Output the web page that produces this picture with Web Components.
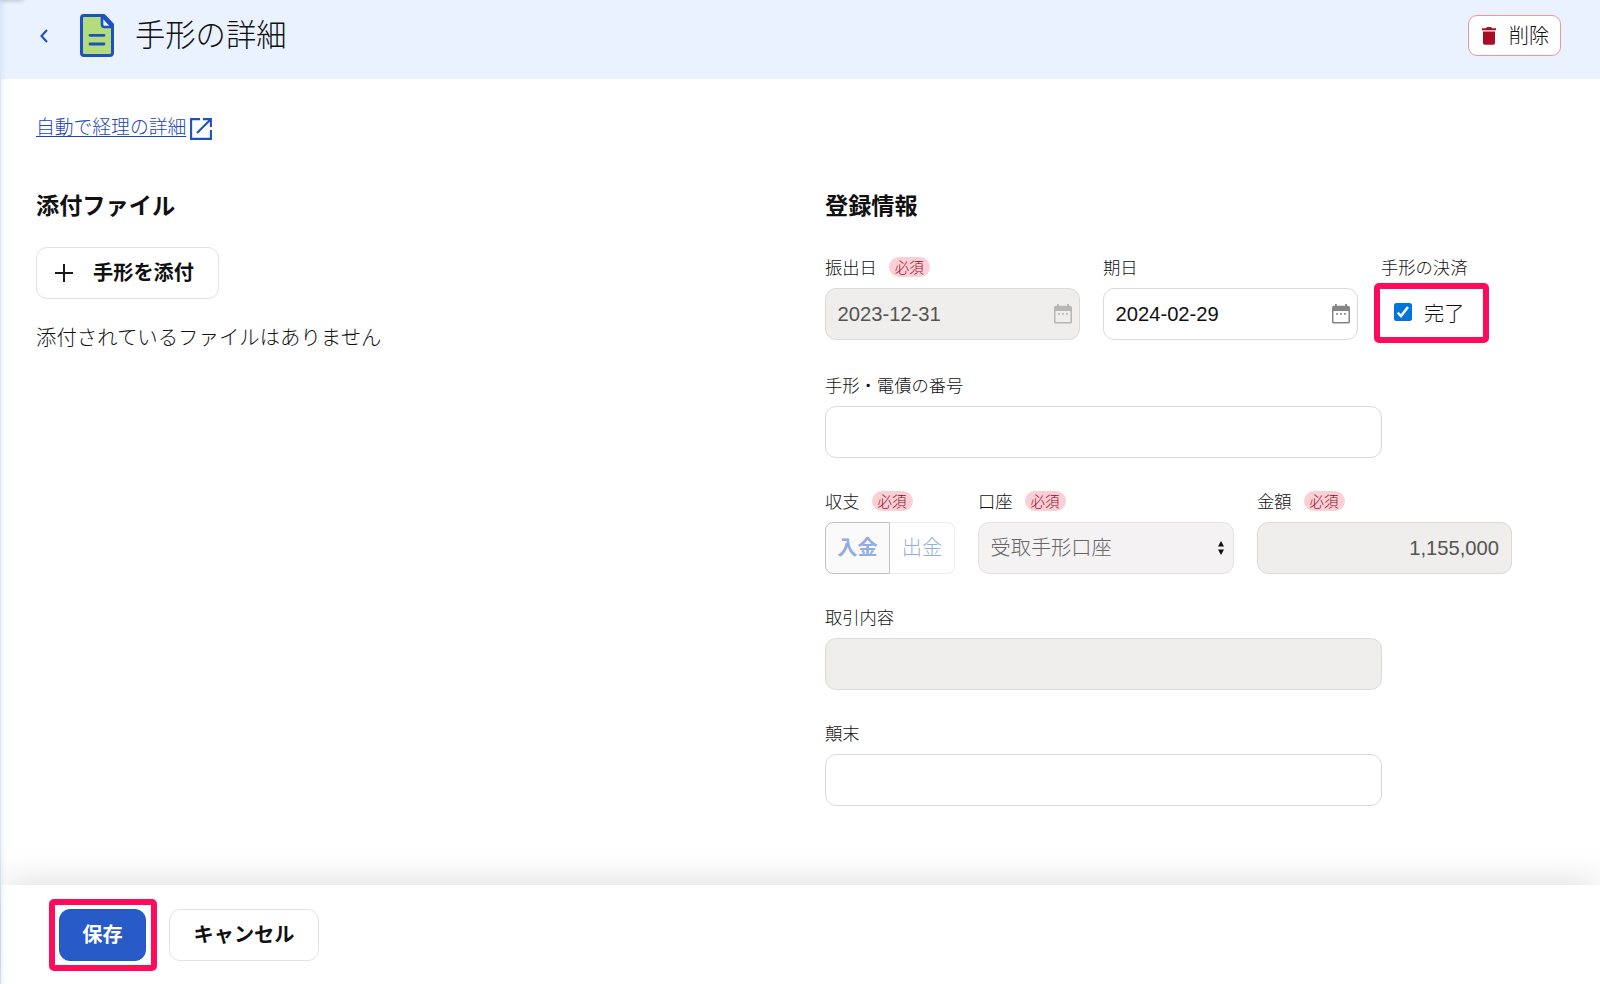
<!DOCTYPE html>
<html lang="ja">
<head>
<meta charset="utf-8">
<title>手形の詳細</title>
<style>
  html, body {
    height: 100%;
    margin: 0;
    overflow: hidden;
  }
  body {
    background: #fff;
    color: #111;
    font-family: "Noto Sans CJK JP", sans-serif;
    font-size: 20.2px;
    font-weight: 300;
    line-height: 30px;
  }
</style>
</head>
<body>
<bill-page>
  <page-header slot="header">
    手形の詳細
    <app-button slot="action" kind="danger">
      <app-icon slot="icon" name="trash"></app-icon>
      削除
    </app-button>
  </page-header>

  <external-link slot="link">自動で経理の詳細</external-link>

  <page-section slot="files" heading="添付ファイル">
    <app-button kind="attach"><app-icon slot="icon" name="plus"></app-icon>手形を添付</app-button>
    <p>添付されているファイルはありません</p>
  </page-section>

  <page-section slot="info" heading="登録情報">
    <form-row first>
      <form-field label="振出日" required><text-box icon="calendar" disabled>2023-12-31</text-box></form-field>
      <form-field label="期日"><text-box icon="calendar">2024-02-29</text-box></form-field>
      <form-field label="手形の決済"><mark-frame kind="check"><check-item>完了</check-item></mark-frame></form-field>
    </form-row>
    <form-row>
      <form-field label="手形・電債の番号"><text-box wide></text-box></form-field>
    </form-row>
    <form-row>
      <form-field label="収支" required><toggle-pair on="入金" off="出金"></toggle-pair></form-field>
      <form-field label="口座" required><text-box icon="updown" select>受取手形口座</text-box></form-field>
      <form-field label="金額" required><text-box number disabled>1,155,000</text-box></form-field>
    </form-row>
    <form-row>
      <form-field label="取引内容"><text-box wide disabled></text-box></form-field>
    </form-row>
    <form-row>
      <form-field label="顛末"><text-box wide></text-box></form-field>
    </form-row>
  </page-section>

  <page-footer slot="footer">
    <mark-frame kind="save"><app-button kind="primary">保存</app-button></mark-frame>
    <app-button kind="cancel">キャンセル</app-button>
  </page-footer>
</bill-page>

<script>
const ICONS = {
  back: [8, 14, '<path d="M7 1 1.5 7 7 13" fill="none" stroke="#1c51c4" stroke-width="2.1"/>'],
  doc: [34, 43, `
    <path d="M4 1.500h20l8.500 9V38.500q0 3-3 3H4q-2.500 0-2.500-2.500V4Q1.500 1.500 4 1.500z" fill="#b3dc7d" stroke="#1c51c4" stroke-width="3" stroke-linejoin="round"/>
    <path d="M22 2v8.500q0 2.500 2.500 2.500H32z" fill="#eaf2ff" stroke="#1c51c4" stroke-width="2.600" stroke-linejoin="round"/>
    <path d="M10 21.300h14M10 30h14" stroke="#1c51c4" stroke-width="2.800" stroke-linecap="round"/>`],
  trash: [14, 18, '<path d="M0 1.300h4L5 0h4l1 1.300h4v2H0zM1 4.500h12v11.500q0 1.800-1.800 1.800H2.800Q1 17.800 1 16z" fill="#a80f22"/>'],
  plus: [18, 18, '<path d="M9 0v18M0 9h18" stroke="#1a1a1a" stroke-width="2"/>'],
  external: [22, 22, '<path d="M10 1.100H1.100v19.800h19.800V12M13 1.100h7.900V9M20.500 1.500 7 15" fill="none" stroke="#1c51c4" stroke-width="2.100"/>'],
  calendar: [18, 20, `
    <path d="M3 0h1.800v1.800h8.400V0H15v1.800h1q2 0 2 2V18q0 1.500-1.500 1.500h-15Q0 19.500 0 18V3.800q0-2 2-2h1zM1.500 7v10.300q0 .7.700.7h13.600q.7 0 .7-.7V7z" fill="currentColor" fill-rule="evenodd"/>
    <path d="M4.200 9h1.800v1.800H4.200zM8.100 9h1.800v1.800H8.100zM12 9h1.800v1.800H12z" fill="currentColor"/>`],
  updown: [6, 14, '<path d="M3 0l3 5.500H0zM3 14 0 8.500h6z" fill="#111"/>'],
  check: [18, 18, `
    <rect width="18" height="18" rx="2.500" fill="#0075db"/>
    <path d="M3.700 9.600 7 13l7-9" fill="none" stroke="#fff" stroke-width="2.500"/>`]
};

class AppIcon extends HTMLElement {
  connectedCallback() {
    const [w, h, body] = ICONS[this.getAttribute('name')];
    this.attachShadow({mode: 'open'}).innerHTML = `
      <style>
        :host { display: block; flex: none; }
        svg { display: block; }
      </style>
      <svg width="${w}" height="${h}" viewBox="0 0 ${w} ${h}">${body}</svg>
    `;
  }
}
customElements.define('app-icon', AppIcon);

class BillPage extends HTMLElement {
  connectedCallback() {
    this.attachShadow({mode: 'open'}).innerHTML = `
      <style>
        :host {
          position: relative;
          display: flex;
          flex-direction: column;
          box-sizing: border-box;
          height: 100vh;
          border-left: 1px solid #dae6ff;
        }
        /* soft edge cast by the side menu */
        :host::before {
          content: "";
          position: absolute;
          z-index: 1;
          inset: 0 auto 0 0;
          width: 5px;
          background: linear-gradient(90deg, rgba(60, 90, 170, .07), transparent);
        }
        :host::after {
          content: "";
          position: absolute;
          top: -4px;
          left: -1px;
          width: 23px;
          height: 4px;
          box-shadow: 0 0 5px rgba(0, 0, 0, .3);
        }
        main {
          flex: 1;
          padding: 32px 35px 0;
        }
        .columns {
          display: grid;
          grid-template-columns: 789px 1fr;
          margin-top: 48px;
        }
      </style>
      <slot name="header"></slot>
      <main>
        <slot name="link"></slot>
        <div class="columns">
          <slot name="files"></slot>
          <slot name="info"></slot>
        </div>
      </main>
      <slot name="footer"></slot>
    `;
  }
}
customElements.define('bill-page', BillPage);

class PageHeader extends HTMLElement {
  connectedCallback() {
    this.attachShadow({mode: 'open'}).innerHTML = `
      <style>
        :host {
          display: flex;
          align-items: center;
          box-sizing: border-box;
          height: 79px;
          padding: 0 39px 8px 39px;
          background: #eaf2ff;
        }
        .doc { margin: 0 0 0 32px; }
        h1 {
          flex: 1;
          margin: -5px 0 0 21px;
          font-size: 30.3px;
          font-weight: 300;
          line-height: 44px;
        }
      </style>
      <app-icon name="back"></app-icon>
      <app-icon class="doc" name="doc"></app-icon>
      <h1><slot></slot></h1>
      <slot name="action"></slot>
    `;
  }
}
customElements.define('page-header', PageHeader);

class AppButton extends HTMLElement {
  connectedCallback() {
    this.attachShadow({mode: 'open'}).innerHTML = `
      <style>
        :host { display: block; flex: none; }
        button {
          display: flex;
          align-items: center;
          justify-content: center;
          box-sizing: border-box;
          width: 100%;
          height: 52px;
          padding: 0 0 2px;
          border: 1px solid #e2e2e2;
          border-radius: 11px;
          background: #fff;
          color: inherit;
          font: inherit;
          font-weight: 700;
          line-height: 30px;
          white-space: nowrap;
        }
        :host([kind="danger"]) { width: 93px; }
        :host([kind="danger"]) button {
          gap: 13px;
          height: 41px;
          padding: 0 0 2px 2px;
          border-color: #f5939e;
          border-radius: 9px;
          font-weight: 300;
        }
        :host([kind="danger"]) ::slotted(app-icon) { margin-top: 2px; }
        :host([kind="attach"]) { width: 183px; }
        :host([kind="attach"]) button {
          justify-content: flex-start;
          gap: 20px;
          padding-left: 18px;
        }
        :host([kind="attach"]) ::slotted(app-icon) { margin-top: 2px; }
        :host([kind="primary"]) { width: 87px; }
        :host([kind="primary"]) button {
          border-color: #1f56c8;
          background: #285ac8;
          color: #fff;
        }
        :host([kind="cancel"]) { width: 150px; }
      </style>
      <button type="button"><slot name="icon"></slot><span><slot></slot></span></button>
    `;
  }
}
customElements.define('app-button', AppButton);

class ExternalLink extends HTMLElement {
  connectedCallback() {
    this.attachShadow({mode: 'open'}).innerHTML = `
      <style>
        :host {
          display: flex;
          align-items: center;
          height: 30px;
          font-size: 18.8px;
        }
        a {
          color: #1c46bd;
          text-decoration: underline;
          text-decoration-thickness: 1px;
          text-underline-offset: 2px;
        }
        app-icon { margin: 6px 0 0 4px; }
      </style>
      <a><slot></slot></a><app-icon name="external"></app-icon>
    `;
  }
}
customElements.define('external-link', ExternalLink);

class PageSection extends HTMLElement {
  connectedCallback() {
    this.attachShadow({mode: 'open'}).innerHTML = `
      <style>
        :host { display: block; }
        h2 {
          margin: 0 0 27px;
          font-size: 23.2px;
          font-weight: 700;
          line-height: 31px;
        }
        ::slotted(p) {
          margin: 22px 0 0;
          font-size: 20.4px;
        }
      </style>
      <h2>${this.getAttribute('heading')}</h2>
      <slot></slot>
    `;
  }
}
customElements.define('page-section', PageSection);

class FormRow extends HTMLElement {
  connectedCallback() {
    this.attachShadow({mode: 'open'}).innerHTML = `
      <style>
        :host {
          display: flex;
          gap: 23px;
          height: 116px;
        }
        :host([first]) {
          height: 118px;
          margin-top: 34px;
        }
      </style>
      <slot></slot>
    `;
  }
}
customElements.define('form-row', FormRow);

class FormField extends HTMLElement {
  connectedCallback() {
    this.attachShadow({mode: 'open'}).innerHTML = `
      <style>
        :host { display: block; }
        .label {
          display: flex;
          align-items: center;
          gap: 12px;
          height: 26px;
          margin-bottom: 8px;
          font-size: 17.3px;
          line-height: 26px;
        }
        .badge {
          width: 41px;
          height: 20px;
          border-radius: 10px;
          background: #fad0d6;
          color: #98051d;
          font-size: 14.5px;
          line-height: 19px;
          text-align: center;
        }
      </style>
      <div class="label">
        <span>${this.getAttribute('label')}</span>
        ${this.hasAttribute('required') ? '<span class="badge">必須</span>' : ''}
      </div>
      <slot></slot>
    `;
  }
}
customElements.define('form-field', FormField);

class TextBox extends HTMLElement {
  connectedCallback() {
    const icon = this.getAttribute('icon');
    this.attachShadow({mode: 'open'}).innerHTML = `
      <style>
        :host {
          display: flex;
          align-items: center;
          justify-content: space-between;
          box-sizing: border-box;
          width: 255px;
          height: 52px;
          padding: 0 7px 0 11.5px;
          border: 1px solid #dadada;
          border-radius: 11px;
          background: #fff;
          font-family: "Liberation Sans", "Noto Sans CJK JP", sans-serif;
          font-weight: 400;
        }
        app-icon { color: #858585; }
        :host([wide]) { width: 557px; }
        :host([disabled]) {
          background: #efeeec;
          color: #545454;
        }
        :host([disabled]) app-icon { color: #b7b6b5; }
        :host([number]) {
          justify-content: flex-end;
          padding-right: 12px;
        }
        :host([select]) {
          padding-right: 9px;
          width: 256px;
          border-color: #e3e3e3;
          background: #f4f2f3;
          color: #666;
          font-family: "Noto Sans CJK JP", sans-serif;
          font-weight: 300;
        }
        :host([select]) span { margin-top: -2px; }
      </style>
      <span><slot></slot></span>
      ${icon ? `<app-icon name="${icon}"></app-icon>` : ''}
    `;
  }
}
customElements.define('text-box', TextBox);

class TogglePair extends HTMLElement {
  connectedCallback() {
    this.attachShadow({mode: 'open'}).innerHTML = `
      <style>
        :host { display: flex; width: 130px; }
        span {
          box-sizing: border-box;
          width: 65px;
          height: 52px;
          border: 1px solid #eee;
          border-left: 0;
          border-radius: 0 8px 8px 0;
          color: #93ade4;
          line-height: 48px;
          text-align: center;
        }
        .on {
          border: 1px solid #c2c2c2;
          border-radius: 8px 0 0 8px;
          background: #fafafa;
          font-weight: 700;
        }
      </style>
      <span class="on">${this.getAttribute('on')}</span><span>${this.getAttribute('off')}</span>
    `;
  }
}
customElements.define('toggle-pair', TogglePair);

class CheckItem extends HTMLElement {
  connectedCallback() {
    this.attachShadow({mode: 'open'}).innerHTML = `
      <style>
        :host {
          display: flex;
          align-items: center;
          gap: 12px;
        }
        app-icon { margin-top: -2px; }
      </style>
      <app-icon name="check"></app-icon><span><slot></slot></span>
    `;
  }
}
customElements.define('check-item', CheckItem);

// Red frame that points at the control inside it
class MarkFrame extends HTMLElement {
  connectedCallback() {
    this.attachShadow({mode: 'open'}).innerHTML = `
      <style>
        :host {
          display: flex;
          align-items: center;
          box-sizing: border-box;
          border: 6px solid #ff0b5b;
          border-radius: 5px;
        }
        :host([kind="check"]) {
          width: 115px;
          height: 60px;
          margin: -5px 0 0 -7px;
          padding-left: 14px;
        }
        :host([kind="save"]) {
          width: 108px;
          height: 72px;
          padding-left: 4px;
        }
      </style>
      <slot></slot>
    `;
  }
}
customElements.define('mark-frame', MarkFrame);

class PageFooter extends HTMLElement {
  connectedCallback() {
    this.attachShadow({mode: 'open'}).innerHTML = `
      <style>
        :host {
          display: flex;
          align-items: center;
          gap: 12px;
          box-sizing: border-box;
          height: 99px;
          padding: 0 48px;
          background: #fff;
          box-shadow: 0 0 40px rgba(0, 0, 0, .15);
        }
      </style>
      <slot></slot>
    `;
  }
}
customElements.define('page-footer', PageFooter);
</script>
</body>
</html>
